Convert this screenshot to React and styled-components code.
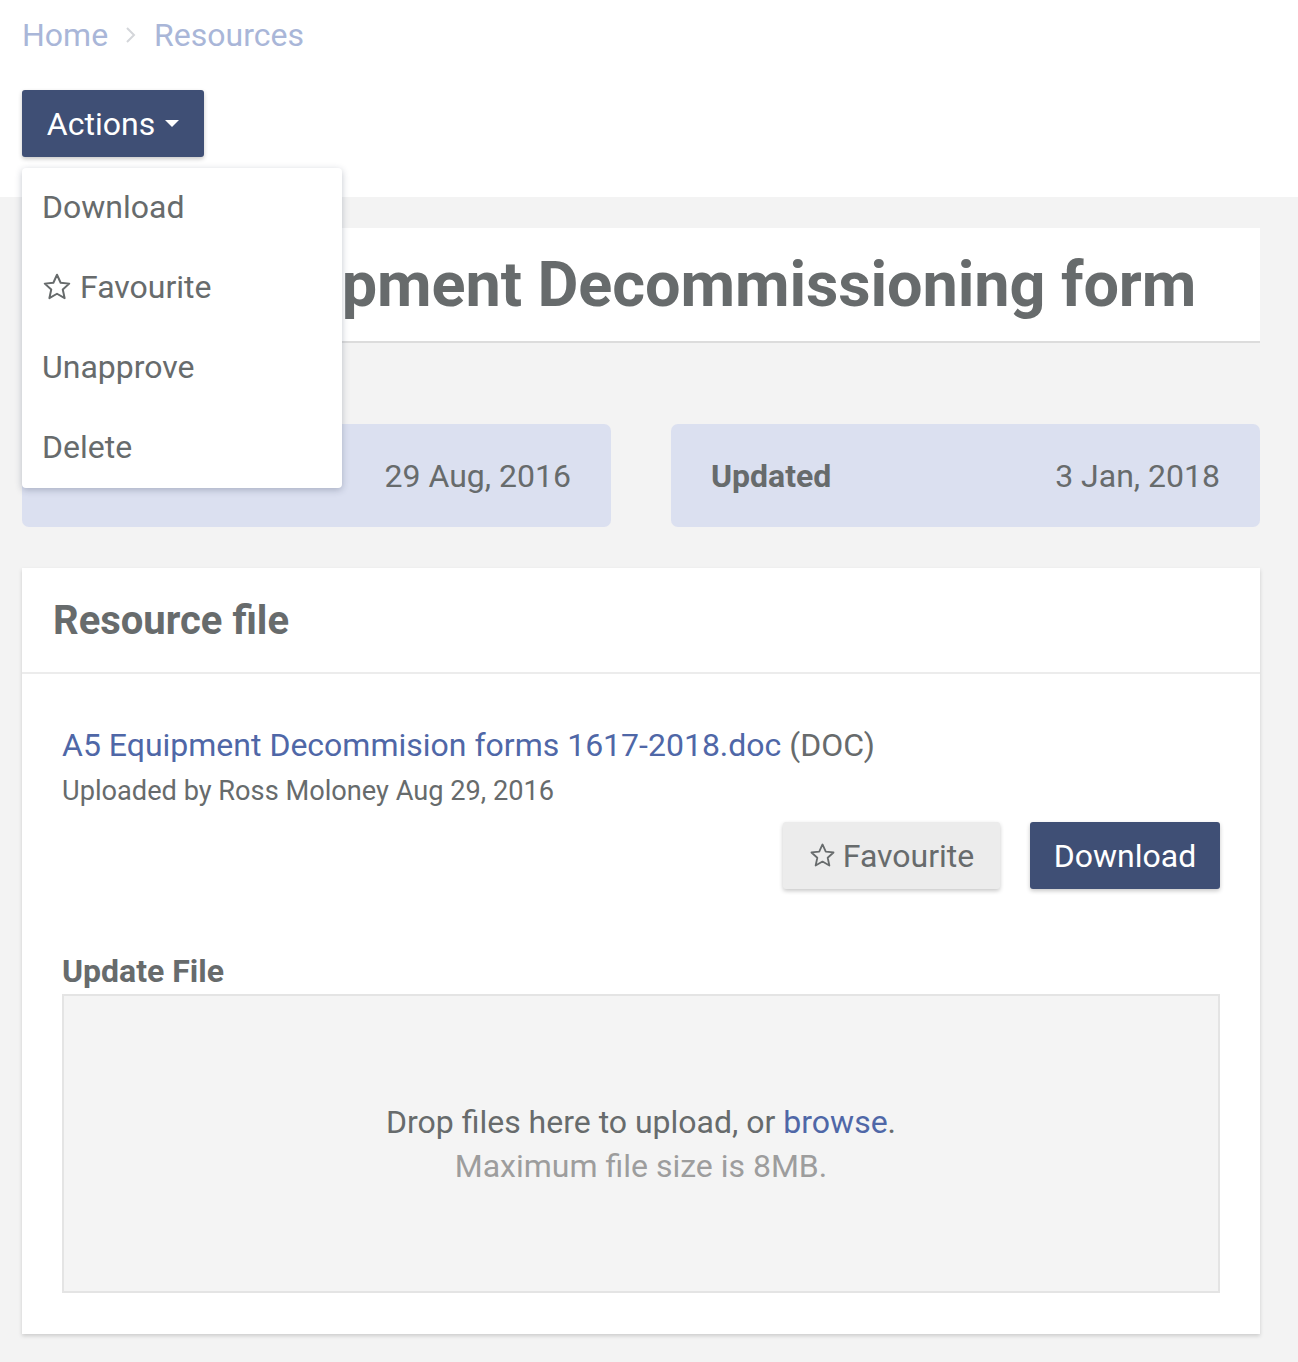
import React from "react";
import styled, { createGlobalStyle } from "styled-components";

const Global = createGlobalStyle`
  html, body { margin: 0; padding: 0; background: #f3f3f3; }
  body { font-family: Roboto, "Liberation Sans", Arial, sans-serif; color: #676b6c; }
  * { box-sizing: border-box; }
`;

const TopBar = styled.div`
  background: #fff;
  height: 197px;
  padding: 15px 22px 0;
`;

const Breadcrumb = styled.nav`
  display: flex;
  align-items: center;
  gap: 17px;
  font-size: 32px;
  line-height: 40px;
  color: #a9b6d8;
`;

const Crumb = styled.a`
  color: #a9b6d8;
  text-decoration: none;
`;

const ActionsWrap = styled.div`
  position: relative;
  margin-top: 35px;
  width: 182px;
`;

const PrimaryButton = styled.button`
  display: inline-flex;
  align-items: center;
  justify-content: center;
  gap: 10px;
  height: 67px;
  width: ${(p) => p.$width || "auto"};
  padding: 0 24px;
  border: none;
  border-radius: 3px;
  background: #3f4f75;
  color: #fff;
  font-family: inherit;
  font-size: 32px;
  box-shadow: 0 2px 4px rgba(0, 0, 0, 0.22);
  cursor: pointer;
`;

const SecondaryButton = styled(PrimaryButton)`
  background: #ececec;
  color: #676b6c;
  gap: 7px;
`;

const Menu = styled.ul`
  position: absolute;
  top: 78px;
  left: 0;
  width: 320px;
  margin: 0;
  padding: 0;
  list-style: none;
  background: #fff;
  border-radius: 4px;
  box-shadow: 0 2px 7px rgba(40, 50, 80, 0.28);
  z-index: 5;
`;

const MenuItem = styled.li`
  display: flex;
  align-items: center;
  gap: 8px;
  height: 80px;
  padding: 0 20px 2px 20px;
  font-size: 32px;
  color: #676b6c;
`;

const Main = styled.main`
  padding: 31px 38px 28px 22px;
`;

const TitleCard = styled.div`
  background: #fff;
  height: 115px;
  border-bottom: 2px solid #dcdcdc;
  display: flex;
  align-items: center;
  padding-left: 104px;
`;

const Title = styled.h1`
  margin: 0;
  font-size: 63px;
  font-weight: 700;
  color: #676b6c;
  line-height: 1;
  letter-spacing: -0.1px;
  white-space: nowrap;
`;

const DateRow = styled.div`
  display: grid;
  grid-template-columns: 1fr 1fr;
  gap: 60px;
  margin-top: 81px;
`;

const DateCard = styled.div`
  height: 103px;
  background: #dbe0f0;
  border-radius: 7px;
  display: flex;
  align-items: center;
  justify-content: space-between;
  padding: 0 40px;
  font-size: 32px;
`;

const DateLabel = styled.span`
  font-weight: 700;
`;

const Card = styled.section`
  margin-top: 41px;
  background: #fff;
  box-shadow: 0 2px 4px rgba(0, 0, 0, 0.16);
`;

const CardHeader = styled.header`
  height: 106px;
  border-bottom: 2px solid #ececec;
  display: flex;
  align-items: center;
  padding: 0 31px;
`;

const CardTitle = styled.h2`
  margin: 0;
  font-size: 40px;
  font-weight: 700;
  color: #676b6c;
`;

const CardBody = styled.div`
  padding: 49px 40px 41px;
`;

const FileLine = styled.div`
  font-size: 32px;
  line-height: 44px;
`;

const Link = styled.a`
  color: #4f67a7;
  text-decoration: none;
`;

const Meta = styled.div`
  margin-top: 6px;
  font-size: 27.2px;
  line-height: 36px;
`;

const ButtonRow = styled.div`
  display: flex;
  justify-content: flex-end;
  gap: 30px;
  margin-top: 13px;
`;

const Label = styled.div`
  margin-top: 62px;
  font-size: 32px;
  font-weight: 700;
  line-height: 40px;
`;

const DropZone = styled.div`
  margin-top: 3px;
  height: 299px;
  background: #f4f4f4;
  border: 2px solid #e4e4e4;
  display: flex;
  flex-direction: column;
  align-items: center;
  justify-content: center;
  font-size: 32px;
  line-height: 44px;
`;

const Hint = styled.div`
  color: #9d9d9d;
`;

const Star = ({ size = 26 }) => (
  <svg width={size} height={size} viewBox="0 0 24 24" fill="none" stroke="currentColor" strokeWidth="1.6" strokeLinejoin="round">
    <polygon points="12,2.2 14.9,8.6 21.8,9.3 16.6,14 18.1,20.9 12,17.4 5.9,20.9 7.4,14 2.2,9.3 9.1,8.6" />
  </svg>
);

const Caret = () => (
  <svg width="14" height="8" viewBox="0 0 14 8">
    <polygon points="0,0 14,0 7,7" fill="#fff" />
  </svg>
);

const Chevron = () => (
  <svg width="12" height="18" viewBox="0 0 12 18" fill="none" stroke="#d4d6da" strokeWidth="2">
    <polyline points="2,2 9,9 2,16" />
  </svg>
);

export default function App() {
  return (
    <>
      <Global />
      <TopBar>
        <Breadcrumb>
          <Crumb href="#">Home</Crumb>
          <Chevron />
          <Crumb href="#">Resources</Crumb>
        </Breadcrumb>
        <ActionsWrap>
          <PrimaryButton $width="182px">
            Actions <Caret />
          </PrimaryButton>
          <Menu>
            <MenuItem>Download</MenuItem>
            <MenuItem>
              <Star size={30} /> Favourite
            </MenuItem>
            <MenuItem>Unapprove</MenuItem>
            <MenuItem>Delete</MenuItem>
          </Menu>
        </ActionsWrap>
      </TopBar>
      <Main>
        <TitleCard>
          <Title>A5 Equipment Decommissioning form</Title>
        </TitleCard>
        <DateRow>
          <DateCard>
            <DateLabel>Created</DateLabel>
            <span>29 Aug, 2016</span>
          </DateCard>
          <DateCard>
            <DateLabel>Updated</DateLabel>
            <span>3 Jan, 2018</span>
          </DateCard>
        </DateRow>
        <Card>
          <CardHeader>
            <CardTitle>Resource file</CardTitle>
          </CardHeader>
          <CardBody>
            <FileLine>
              <Link href="#">A5 Equipment Decommision forms 1617-2018.doc</Link> (DOC)
            </FileLine>
            <Meta>Uploaded by Ross Moloney Aug 29, 2016</Meta>
            <ButtonRow>
              <SecondaryButton $width="217px">
                <Star size={27} /> Favourite
              </SecondaryButton>
              <PrimaryButton $width="190px">Download</PrimaryButton>
            </ButtonRow>
            <Label>Update File</Label>
            <DropZone>
              <div>
                Drop files here to upload, or <Link href="#">browse</Link>.
              </div>
              <Hint>Maximum file size is 8MB.</Hint>
            </DropZone>
          </CardBody>
        </Card>
      </Main>
    </>
  );
}
